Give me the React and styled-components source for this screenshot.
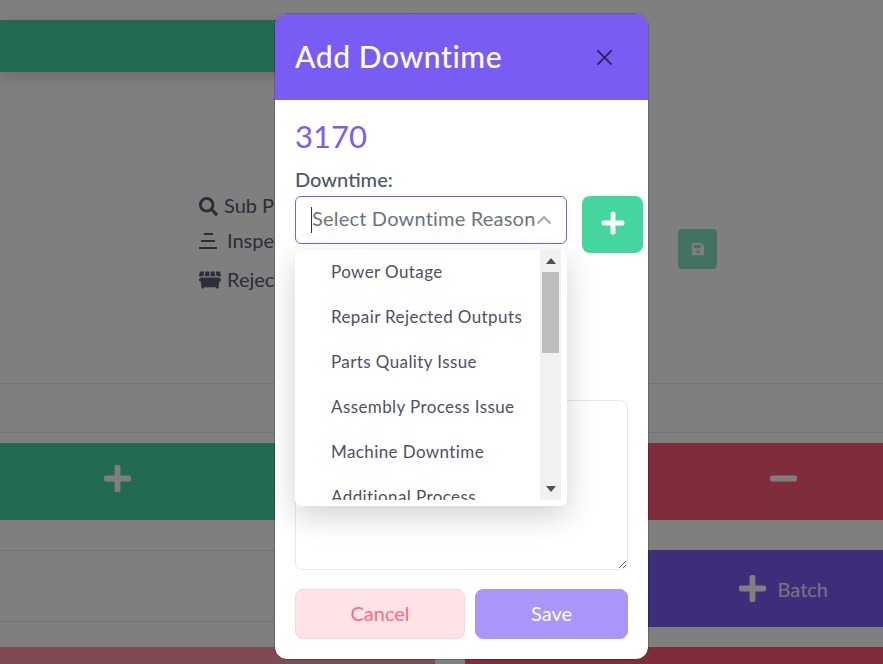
import React from 'react'
import styled, { createGlobalStyle } from 'styled-components'
import { FaSearch, FaDumpster, FaSave, FaPlus, FaMinus } from 'react-icons/fa'

const GlobalStyle = createGlobalStyle`
  html, body {
    margin: 0;
    padding: 0;
    background: #fff;
    font-family: Lato, "Open Sans", sans-serif;
  }
  * { box-sizing: border-box; }
`

const Page = styled.div`
  position: relative;
  width: 883px;
  height: 664px;
  overflow: hidden;
  padding-top: 20px;
  background: #fff;
`

const TopBar = styled.div`
  width: 420px;
  height: 52px;
  background: #45d6a0;
  box-shadow: 0 5px 15px rgba(0, 0, 0, 0.15);
`

const InfoSection = styled.div`
  display: flex;
  height: 311px;
  padding: 122px 0 0 199px;
`

const InfoList = styled.div`
  width: 479px;
  color: #565a70;
  font-size: 20px;
`

const InfoRow = styled.div`
  display: flex;
  align-items: center;
  height: 24px;
  gap: ${p => p.$gap}px;
  margin-bottom: ${p => p.$below}px;
`

const InfoText = styled.span`
  line-height: 22px;
  margin-bottom: 2px;
  white-space: nowrap;
`

const SaveSmall = styled.div`
  display: flex;
  align-items: center;
  justify-content: center;
  width: 39px;
  height: 40px;
  margin-top: 35px;
  border-radius: 4px;
  background: #45d6a0;
  color: #fff;
  font-size: 14px;
  opacity: 0.65;
`

const TableRow = styled.div`
  height: 50px;
  border-top: 1px solid #e4e3ee;
  border-bottom: 1px solid #e4e3ee;
`

const ActionGrid = styled.div`
  display: grid;
  grid-template-columns: 435px 1fr;
  column-gap: 30px;
  margin-top: ${p => p.$top}px;
`

const BigAction = styled.div`
  display: flex;
  align-items: center;
  justify-content: ${p => (p.$end ? 'flex-end' : 'flex-start')};
  height: 77px;
  padding: ${p => (p.$end ? '0 84px 6px 0' : '0 0 6px 102px')};
  background: ${p => p.$bg};
  color: #fff;
  font-size: 31px;
`

const BatchAction = styled(BigAction)`
  gap: 10px;
  padding: 0 55px 0 0;
  margin-bottom: 20px;
`

const BatchLabel = styled.span`
  font-size: 20px;
  opacity: 0.9;
`

const LeftLines = styled.div`
  height: 72px;
  border-top: 1px solid #e4e3ee;
  border-bottom: 1px solid #e4e3ee;
`

const BottomBar = styled.div`
  height: 40px;
  background: ${p => p.$bg};
`

const Overlay = styled.div`
  position: absolute;
  inset: 0;
  padding: 14px 0 0 275px;
  background: rgba(0, 0, 0, 0.5);
`

const Modal = styled.div`
  width: 373px;
  height: 645px;
  border-radius: 12px;
  outline: 1px solid rgba(0, 0, 0, 0.2);
  background: #fff;
  overflow: hidden;
`

const ModalHeader = styled.div`
  display: flex;
  align-items: center;
  justify-content: space-between;
  height: 86px;
  padding: 0 36px 0 20px;
  background: #7a5cf5;
`

const Title = styled.div`
  margin-bottom: 2px;
  color: #fff;
  font-size: 30px;
  font-weight: 500;
  letter-spacing: 0.6px;
`

const ModalBody = styled.div`
  position: relative;
  padding: 20px 20px 0;
`

const Code = styled.div`
  height: 36px;
  color: #7a5cf5;
  font-size: 31px;
  line-height: 32px;
`

const Label = styled.div`
  height: 24px;
  margin-top: 11px;
  color: #4c5a67;
  font-size: 20px;
  font-weight: 500;
  line-height: 24px;
`

const SelectRow = styled.div`
  display: flex;
  gap: 15px;
  width: 348px;
  margin-top: 5px;
`

const SelectBox = styled.div`
  display: flex;
  flex: none;
  align-items: center;
  justify-content: space-between;
  width: 272px;
  height: 48px;
  padding: 0 14px 0 15px;
  border: 1px solid #7a5cf5;
  border-radius: 6px;
  background: #fff;
`

const Placeholder = styled.span`
  height: 26px;
  border-left: 1px solid #333;
  color: #6c757d;
  font-size: 20px;
  letter-spacing: 0.2px;
  line-height: 23px;
  white-space: nowrap;
`

const AddButton = styled.div`
  display: flex;
  flex: none;
  align-items: center;
  justify-content: center;
  width: 61px;
  height: 57px;
  padding-bottom: 4px;
  border-radius: 8px;
  background: #45d6a0;
  color: #fff;
  font-size: 26px;
`

const Dropdown = styled.div`
  position: absolute;
  top: 150px;
  left: 20px;
  display: flex;
  width: 272px;
  height: 256px;
  padding: 0 6px 6px 0;
  border-radius: 6px;
  background: #fff;
  box-shadow: 0 10px 30px rgba(0, 0, 0, 0.18);
`

const OptionList = styled.div`
  flex: 1;
  overflow: hidden;
`

const Option = styled.div`
  height: 45px;
  padding-left: 36px;
  color: #4f5062;
  font-size: 17px;
  letter-spacing: 0.4px;
  line-height: 43px;
  white-space: nowrap;
`

const ScrollTrack = styled.div`
  display: flex;
  flex-direction: column;
  align-items: center;
  width: 21px;
  background: #f1f1f1;
`

const ScrollArrow = styled.div`
  display: flex;
  align-items: center;
  justify-content: center;
  flex: none;
  height: 22px;
`

const ScrollThumb = styled.div`
  width: 17px;
  height: 81px;
  background: #bdbdbd;
`

const ScrollSpace = styled.div`
  flex: 1;
`

const Notes = styled.textarea`
  display: block;
  width: 333px;
  height: 170px;
  margin-top: 147px;
  border: 1px solid #e6e5f0;
  border-radius: 8px;
  outline: none;
`

const ButtonRow = styled.div`
  display: flex;
  gap: 10px;
  margin-top: 19px;
`

const Button = styled.div`
  display: flex;
  align-items: center;
  justify-content: center;
  width: ${p => p.$width}px;
  height: 50px;
  padding-bottom: 3px;
  border: 1px solid ${p => p.$border};
  border-radius: 8px;
  background: ${p => p.$bg};
  color: ${p => p.$color};
  font-size: 20px;
`

const options = [
  'Power Outage',
  'Repair Rejected Outputs',
  'Parts Quality Issue',
  'Assembly Process Issue',
  'Machine Downtime',
  'Additional Process',
]

function App() {
  return (
    <Page>
      <GlobalStyle />
      <TopBar />
      <InfoSection>
        <InfoList>
          <InfoRow $gap={6} $below={11}>
            <FaSearch size={19} />
            <InfoText>Sub Process</InfoText>
          </InfoRow>
          <InfoRow $gap={10} $below={15}>
            <svg width="18" height="18" viewBox="0 0 18 18" fill="currentColor">
              <rect x="5" y="1" width="9" height="2" />
              <rect x="2" y="8" width="14" height="2" />
              <rect x="0" y="15" width="18" height="2" />
            </svg>
            <InfoText>Inspection</InfoText>
          </InfoRow>
          <InfoRow $gap={6} $below={0}>
            <FaDumpster size={22} />
            <InfoText>Rejected</InfoText>
          </InfoRow>
        </InfoList>
        <SaveSmall>
          <FaSave />
        </SaveSmall>
      </InfoSection>
      <TableRow />
      <ActionGrid $top={10}>
        <BigAction $bg="#45d6a0">
          <FaPlus />
        </BigAction>
        <BigAction $bg="#ff5b75" $end>
          <FaMinus />
        </BigAction>
      </ActionGrid>
      <ActionGrid $top={30}>
        <LeftLines />
        <BatchAction $bg="#7b5af5" $end>
          <FaPlus />
          <BatchLabel>Batch</BatchLabel>
        </BatchAction>
        <BottomBar $bg="#ff95a4" />
        <BottomBar $bg="#ff5b75" />
      </ActionGrid>
      <Overlay>
        <Modal>
          <ModalHeader>
            <Title>Add Downtime</Title>
            <svg width="15" height="15" viewBox="0 0 16 16" fill="#2a2260">
              <path d="M.293.293a1 1 0 0 1 1.414 0L8 6.586 14.293.293a1 1 0 1 1 1.414 1.414L9.414 8l6.293 6.293a1 1 0 0 1-1.414 1.414L8 9.414l-6.293 6.293a1 1 0 0 1-1.414-1.414L6.586 8 .293 1.707a1 1 0 0 1 0-1.414z" />
            </svg>
          </ModalHeader>
          <ModalBody>
            <Code>3170</Code>
            <Label>Downtime:</Label>
            <SelectRow>
              <SelectBox>
                <Placeholder>Select Downtime Reason</Placeholder>
                <svg width="16" height="10" viewBox="0 0 16 10" fill="none" stroke="#a3a7ab" strokeWidth="2">
                  <path d="M1.5 8.5 8 2l6.5 6.5" />
                </svg>
              </SelectBox>
              <AddButton>
                <FaPlus />
              </AddButton>
            </SelectRow>
            <Notes />
            <ButtonRow>
              <Button $width={170} $bg="#ffe3e6" $border="#ffd0d7" $color="#ff6b81">Cancel</Button>
              <Button $width={153} $bg="#a996f8" $border="#a996f8" $color="#fff">Save</Button>
            </ButtonRow>
            <Dropdown>
              <OptionList>
                {options.map(o => (
                  <Option key={o}>{o}</Option>
                ))}
              </OptionList>
              <ScrollTrack>
                <ScrollArrow>
                  <svg width="10" height="6" viewBox="0 0 10 6" fill="#505050"><path d="M5 0l5 6H0z" /></svg>
                </ScrollArrow>
                <ScrollThumb />
                <ScrollSpace />
                <ScrollArrow>
                  <svg width="10" height="6" viewBox="0 0 10 6" fill="#505050"><path d="M5 6L0 0h10z" /></svg>
                </ScrollArrow>
              </ScrollTrack>
            </Dropdown>
          </ModalBody>
        </Modal>
      </Overlay>
    </Page>
  )
}

export default App
